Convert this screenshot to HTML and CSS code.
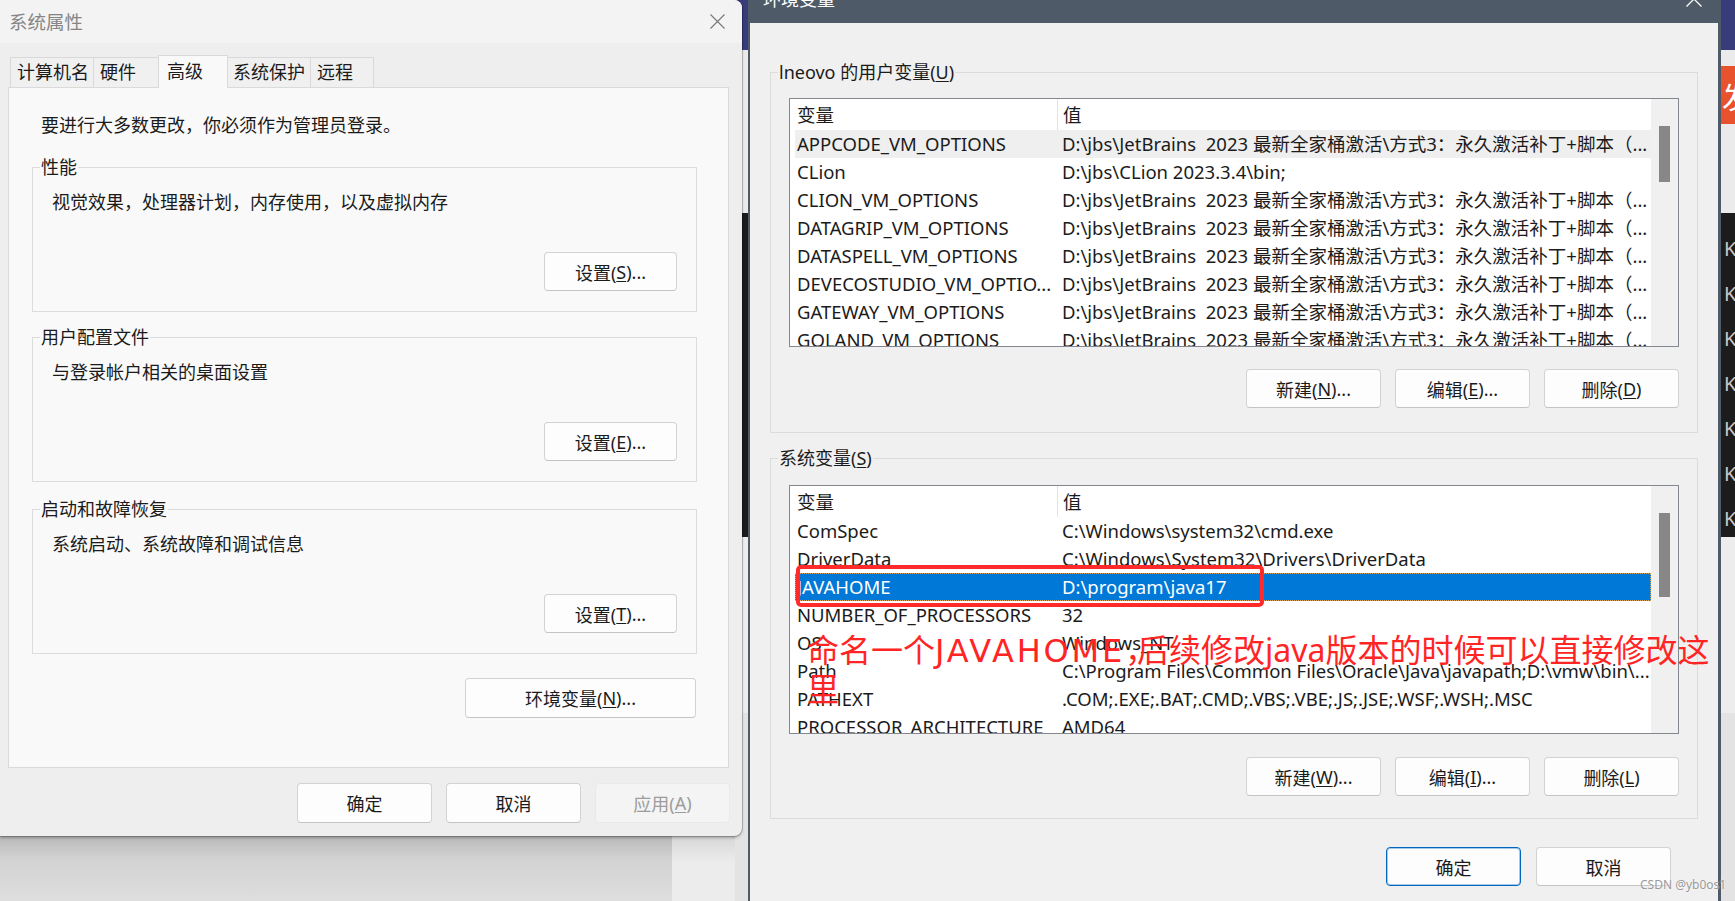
FILE: index.html
```html
<!DOCTYPE html>
<html lang="zh-CN">
<head>
<meta charset="utf-8">
<title>环境变量</title>
<link rel="stylesheet" href="styles.css">
</head>
<body>
<div class="desktop">
  <div class="bg bg-top"></div>
  <div class="bg bg-mid"></div>
  <div class="bg bg-badge">发</div>
  <div class="bg bg-term">
    <span class="term-k">K</span>
    <span class="term-k">K</span>
    <span class="term-k">K</span>
    <span class="term-k">K</span>
    <span class="term-k">K</span>
    <span class="term-k">K</span>
    <span class="term-k">K</span>
  </div>
  <div class="bg bg-low"></div>
  <div class="bg bg-shadow"></div>
  <div class="bg bg-light"></div>

  <section class="win win-sys">
    <header class="sys-title">
      <span class="sys-title-text">系统属性</span>
      <svg class="sys-close" viewBox="0 0 15 15" width="15" height="15"><path d="M0.5 0.5L14.5 14.5M14.5 0.5L0.5 14.5"/></svg>
    </header>
    <nav class="tabs">
      <span class="tab t1">计算机名</span>
      <span class="tab t2">硬件</span>
      <span class="tab t3 active">高级</span>
      <span class="tab t4">系统保护</span>
      <span class="tab t5">远程</span>
    </nav>
    <div class="panel">
      <p class="intro">要进行大多数更改，你必须作为管理员登录。</p>
      <div class="sgroup">
        <span class="glabel">性能</span>
        <p class="gtext">视觉效果，处理器计划，内存使用，以及虚拟内存</p>
        <button class="btn btn-set">设置(<u>S</u>)...</button>
      </div>
      <div class="sgroup g2">
        <span class="glabel">用户配置文件</span>
        <p class="gtext">与登录帐户相关的桌面设置</p>
        <button class="btn btn-set">设置(<u>E</u>)...</button>
      </div>
      <div class="sgroup g3">
        <span class="glabel">启动和故障恢复</span>
        <p class="gtext">系统启动、系统故障和调试信息</p>
        <button class="btn btn-set">设置(<u>T</u>)...</button>
      </div>
      <div class="env-row">
        <button class="btn btn-env">环境变量(<u>N</u>)...</button>
      </div>
    </div>
    <div class="sys-actions">
      <button class="btn btn-act">确定</button>
      <button class="btn btn-act">取消</button>
      <button class="btn btn-act disabled">应用(<u>A</u>)</button>
    </div>
  </section>

  <section class="win win-env">
    <header class="env-title">
      <span class="env-title-text">环境变量</span>
      <svg class="env-close" viewBox="0 0 16 16" width="16" height="16"><path d="M0.5 0.5L15.5 15.5M15.5 0.5L0.5 15.5"/></svg>
    </header>
    <div class="env-body">
      <div class="egroup">
        <span class="elabel">lneovo 的用户变量(<u>U</u>)</span>
        <div class="lv">
          <div class="lv-main">
            <div class="lv-head"><span class="c1">变量</span><span class="c2">值</span></div>
            <div class="lv-row hover"><span class="c1">APPCODE_VM_OPTIONS</span><span class="c2">D:\jbs\JetBrains&nbsp; 2023 最新全家桶激活\方式3：永久激活补丁+脚本（...</span></div>
            <div class="lv-row"><span class="c1">CLion</span><span class="c2">D:\jbs\CLion 2023.3.4\bin;</span></div>
            <div class="lv-row"><span class="c1">CLION_VM_OPTIONS</span><span class="c2">D:\jbs\JetBrains&nbsp; 2023 最新全家桶激活\方式3：永久激活补丁+脚本（...</span></div>
            <div class="lv-row"><span class="c1">DATAGRIP_VM_OPTIONS</span><span class="c2">D:\jbs\JetBrains&nbsp; 2023 最新全家桶激活\方式3：永久激活补丁+脚本（...</span></div>
            <div class="lv-row"><span class="c1">DATASPELL_VM_OPTIONS</span><span class="c2">D:\jbs\JetBrains&nbsp; 2023 最新全家桶激活\方式3：永久激活补丁+脚本（...</span></div>
            <div class="lv-row"><span class="c1">DEVECOSTUDIO_VM_OPTIO...</span><span class="c2">D:\jbs\JetBrains&nbsp; 2023 最新全家桶激活\方式3：永久激活补丁+脚本（...</span></div>
            <div class="lv-row"><span class="c1">GATEWAY_VM_OPTIONS</span><span class="c2">D:\jbs\JetBrains&nbsp; 2023 最新全家桶激活\方式3：永久激活补丁+脚本（...</span></div>
            <div class="lv-row"><span class="c1">GOLAND_VM_OPTIONS</span><span class="c2">D:\jbs\JetBrains&nbsp; 2023 最新全家桶激活\方式3：永久激活补丁+脚本（...</span></div>
          </div>
          <div class="lv-scroll"><div class="thumb thumb-a"></div></div>
        </div>
        <div class="ebtns">
          <button class="btn ebtn">新建(<u>N</u>)...</button>
          <button class="btn ebtn">编辑(<u>E</u>)...</button>
          <button class="btn ebtn">删除(<u>D</u>)</button>
        </div>
      </div>

      <div class="egroup second">
        <span class="elabel">系统变量(<u>S</u>)</span>
        <div class="lv">
          <div class="lv-main">
            <div class="lv-head"><span class="c1">变量</span><span class="c2">值</span></div>
            <div class="lv-row"><span class="c1">ComSpec</span><span class="c2">C:\Windows\system32\cmd.exe</span></div>
            <div class="lv-row"><span class="c1">DriverData</span><span class="c2">C:\Windows\System32\Drivers\DriverData</span></div>
            <div class="lv-row sel"><span class="c1">JAVAHOME</span><span class="c2">D:\program\java17</span></div>
            <div class="lv-row"><span class="c1">NUMBER_OF_PROCESSORS</span><span class="c2">32</span></div>
            <div class="lv-row"><span class="c1">OS</span><span class="c2">Windows_NT</span></div>
            <div class="lv-row"><span class="c1">Path</span><span class="c2">C:\Program Files\Common Files\Oracle\Java\javapath;D:\vmw\bin\...</span></div>
            <div class="lv-row"><span class="c1">PATHEXT</span><span class="c2">.COM;.EXE;.BAT;.CMD;.VBS;.VBE;.JS;.JSE;.WSF;.WSH;.MSC</span></div>
            <div class="lv-row"><span class="c1">PROCESSOR_ARCHITECTURE</span><span class="c2">AMD64</span></div>
          </div>
          <div class="lv-scroll"><div class="thumb thumb-b"></div></div>
        </div>
        <div class="ebtns">
          <button class="btn ebtn">新建(<u>W</u>)...</button>
          <button class="btn ebtn">编辑(<u>I</u>)...</button>
          <button class="btn ebtn">删除(<u>L</u>)</button>
        </div>
      </div>

      <div class="eactions">
        <button class="btn ebtn default">确定</button>
        <button class="btn ebtn">取消</button>
      </div>
    </div>
  </section>

  <div class="redbox"></div>
  <p class="note">命名一个<span class="note-latin">JAVAHOME</span><span class="note-comma">，</span>后续修改java版本的时候可以直接修改这里</p>
  <div class="watermark">CSDN @yb0os1</div>
</div>
</body>
</html>
```

FILE: styles.css
```css
* { box-sizing: border-box; }
html, body { margin: 0; padding: 0; }
body {
  font-family: "Noto Sans", "Noto Sans CJK SC", sans-serif;
  font-size: 18px;
  color: #1b1b1b;
  background: #e3e3e3;
}
p { margin: 0; }
u { text-underline-offset: 2px; text-decoration-thickness: 1px; }

.desktop {
  position: relative;
  width: 1735px;
  height: 901px;
  overflow: hidden;
  background: #e3e3e3;
}

/* background desktop fragments */
.bg { position: absolute; }
.bg-top { left: 600px; top: 0; width: 1135px; height: 50px; background: #383c7a; }
.bg-mid { left: 600px; top: 50px; width: 1135px; height: 163px; background: #ebebeb; }
.bg-badge {
  left: 1721px; top: 66px; width: 40px; height: 58px;
  background: #e8522d; color: #fff;
  font-family: "Noto Sans CJK SC", sans-serif;
  font-size: 30px; line-height: 58px; padding-left: 1px;
}
.bg-term {
  left: 600px; top: 213px; width: 1135px; height: 324px;
  background: #1c1c1c;
  display: flex; flex-direction: column;
  padding: 13px 0 0 1124px;
}
.term-k { color: #c9c9c9; font-size: 20px; line-height: 45px; }
.bg-low { left: 600px; top: 537px; width: 1135px; height: 176px; background: #ededed; }
.bg-shadow {
  left: 0; top: 836px; width: 672px; height: 65px;
  background: linear-gradient(#b9b9b9, #d2d2d2 35%, #dedede);
}
.bg-light { left: 672px; top: 836px; width: 63px; height: 65px; background: linear-gradient(#d6d6d6, #ececec 40%); }

.win { position: absolute; }

/* ===== 系统属性 ===== */
.win-sys {
  left: 0; top: 0;
  width: 742px; height: 836px;
  background: #eeeeee;
  border-radius: 0 8px 8px 0;
  overflow: hidden;
  display: flex; flex-direction: column;
  box-shadow: 0 0 0 1px rgba(0,0,0,0.18), 0 2px 3px rgba(0,0,0,0.25);
}
.sys-title {
  height: 43px; flex: none;
  background: #f3f3f3;
  display: flex; align-items: center;
  padding-left: 9px;
}
.sys-title-text { color: #858585; line-height: 24px; font-size: 18.5px; }
.sys-close { margin-left: auto; margin-right: 17px; }
.sys-close path { stroke: #7a7a7a; stroke-width: 1.2; fill: none; }

.tabs {
  position: relative; z-index: 1;
  display: flex; align-items: flex-end;
  height: 32px; margin: 12px 0 0 10px;
}
.tab {
  height: 30px;
  border: 1px solid #d9d9d9; border-bottom: none;
  background: #f0f0f0;
  line-height: 29px;
  padding-left: 6px;
  white-space: nowrap;
  margin-left: -1px;
}
.tab.t1 { width: 84px; margin-left: 0; }
.tab.t2 { width: 66px; }
.tab.t3 { width: 70px; padding-left: 8px; }
.tab.t4 { width: 84px; padding-left: 5px; }
.tab.t5 { width: 64px; }
.tab.active {
  position: relative; z-index: 2;
  height: 33px; margin-bottom: -1px;
  background: #f9f9f9;
  line-height: 31px;
}

.panel {
  margin-left: 8px;
  width: 721px; height: 681px; flex: none;
  border: 1px solid #dadada;
  background: #f9f9f9;
  padding: 25px 31px 0 23px;
}
.intro { margin-left: 9px; line-height: 24px; }
.sgroup {
  position: relative;
  height: 145px;
  margin-top: 30px;
  border: 1px solid #dcdcdc;
  padding: 22px 19px 20px 19px;
  display: flex; flex-direction: column; align-items: flex-start;
}
.sgroup.g2 { margin-top: 25px; }
.sgroup.g3 { margin-top: 27px; }
.glabel {
  position: absolute; left: 7px; top: -13px;
  background: #f9f9f9; padding: 0 1px;
  line-height: 24px;
}
.gtext { line-height: 24px; }
.btn {
  font: inherit; color: #1b1b1b;
  background: #fdfdfd;
  border: 1px solid #d3d3d3; border-bottom-color: #c4c4c4;
  border-radius: 4px;
  padding: 0;
  display: flex; align-items: center; justify-content: center;
  white-space: nowrap;
}
.btn-set { width: 133px; height: 39px; margin-top: 38px; align-self: flex-end; }
.env-row { display: flex; justify-content: flex-end; margin-top: 24px; padding-right: 1px; }
.btn-env { width: 231px; height: 40px; }

.sys-actions {
  display: flex; justify-content: flex-end; gap: 14px;
  margin-top: 15px; padding-right: 12px;
}
.btn-act { width: 135px; height: 40px; }
.btn-act.disabled {
  background: #f4f4f4; border-color: #e9e9e9; color: #9c9c9c;
}

/* ===== 环境变量 ===== */
.win-env {
  left: 748px; top: -20px;
  width: 973px; height: 945px;
  background: #f0f0f0;
  border-left: 2px solid #4f5a69;
  border-right: 3px solid #4f5a69;
  display: flex; flex-direction: column;
}
.env-title {
  height: 43px; flex: none;
  background: #4f5a69;
  color: #ffffff;
  display: flex; align-items: center;
  padding: 0 16px 6px 13px;
}
.env-title-text { line-height: 24px; }
.env-close { margin-left: auto; }
.env-close path { stroke: #ffffff; stroke-width: 1.3; fill: none; }

.env-body { padding: 0 20px; }
.egroup {
  position: relative;
  margin-top: 49px;
  border: 1px solid #dcdcdc;
  padding: 25px 18px 24px 18px;
}
.egroup.second { margin-top: 25px; padding-top: 26px; padding-bottom: 22px; }
.egroup.second .ebtns { margin-top: 23px; }
.elabel {
  position: absolute; left: 7px; top: -13px;
  background: #f0f0f0; padding: 0 1px;
  line-height: 24px;
}

.lv {
  display: flex;
  height: 249px;
  border: 1px solid #828790;
  background: #ffffff;
  font-size: 18.5px;
}
.lv-main { flex: 1; min-width: 0; overflow: hidden; }
.lv-head { display: flex; height: 31px; margin-left: 5px; }
.lv-head .c1 { line-height: 31px; }
.lv-head .c2 { border-left: 1px solid #e3e3e3; line-height: 31px; }
.lv-row { display: flex; height: 28px; margin-left: 5px; line-height: 28px; }
.c1 { width: 262px; flex: none; padding-left: 2px; white-space: nowrap; overflow: hidden; }
.c2 { flex: 1; min-width: 0; padding-left: 5px; white-space: pre; overflow: hidden; }
.lv-row.hover { background: #efefef; }
.lv-row.sel {
  background: #0078d7; color: #ffffff;
  outline: 1px dotted #d9a45c; outline-offset: -1px;
}
.lv-scroll { width: 27px; flex: none; background: #f0f0f0; padding: 27px 8px 0 8px; }
.thumb { width: 11px; background: #878787; }
.thumb-a { height: 56px; }
.thumb-b { height: 84px; }

.ebtns { display: flex; justify-content: flex-end; gap: 14px; margin-top: 22px; }
.ebtn { width: 135px; height: 39px; }
.eactions {
  display: flex; justify-content: flex-end; gap: 15px;
  margin-top: 28px; padding-right: 27px;
}
.ebtn.default { border-color: #0067c0; box-shadow: inset 0 0 0 1px rgba(0,103,192,0.35); }

/* ===== overlays ===== */
.redbox {
  position: absolute; left: 796px; top: 565px;
  width: 468px; height: 42px;
  border: 4px solid #ff2b2b; border-radius: 5px;
}
.note {
  position: absolute; left: 807px; top: 631px;
  width: 920px;
  font-size: 32px; line-height: 38px;
  color: #ff2525;
}
.note-latin { font-family: "DejaVu Sans", "Noto Sans", sans-serif; letter-spacing: 2.8px; }
.note-comma { letter-spacing: -20px; }
.watermark {
  position: absolute; left: 1640px; top: 877px;
  font-size: 12px; line-height: 15px;
  color: #9a9a9a;
  text-shadow: 0 0 2px #ffffff;
}
```
